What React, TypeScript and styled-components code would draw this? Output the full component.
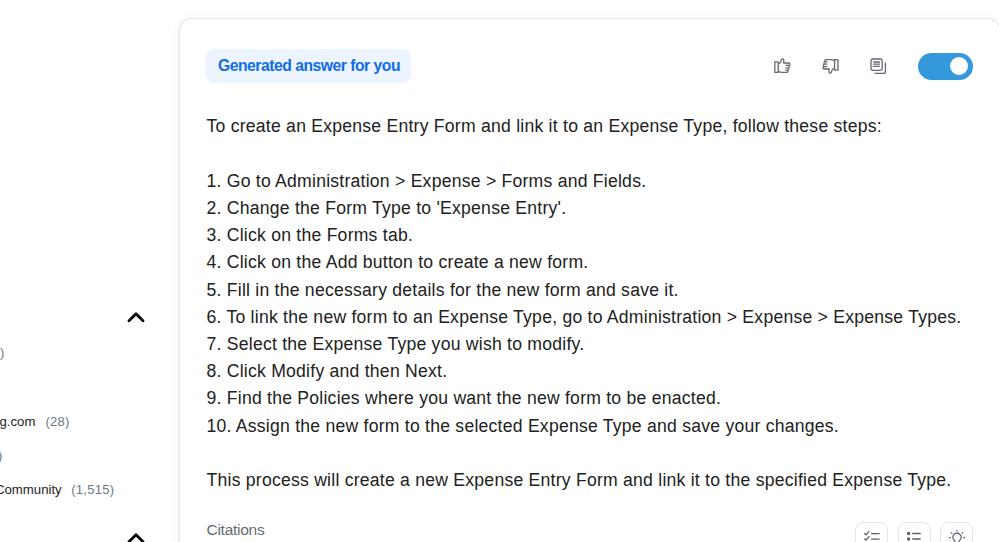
import React from "react";
import styled, { createGlobalStyle } from "styled-components";

const GlobalStyle = createGlobalStyle`
  * { box-sizing: border-box; }
  html, body { margin: 0; background: #fff; overflow: hidden; }
  body { font-family: "Liberation Sans", Arial, sans-serif; }
`;

const Page = styled.div`
  display: flex;
  width: 999px;
  height: 542px;
  overflow: hidden;
  background: #fff;
`;

const Sidebar = styled.aside`
  flex: 0 0 178px;
  padding-top: 300px;
`;

const SectionToggle = styled.div`
  display: flex;
  justify-content: flex-end;
  align-items: center;
  height: 34px;
  padding-right: 33px;
  svg { display: block; }
`;

const Facet = styled.div<{ $height: number; $shift: number }>`
  display: flex;
  align-items: center;
  height: ${(p) => p.$height}px;
  margin-left: ${(p) => p.$shift}px;
  font-size: 13.2px;
  color: #222;
  white-space: nowrap;
`;

const Count = styled.span<{ $gap?: number }>`
  margin-left: ${(p) => p.$gap ?? 0}px;
  font-size: 13px;
  letter-spacing: 0.3px;
  color: #6b7888;
`;

const FacetSpacer = styled.div<{ $height: number }>`
  height: ${(p) => p.$height}px;
`;

const Card = styled.main`
  flex: 0 0 823px;
  height: 620px;
  margin-top: 18px;
  padding: 30px 0 0 27px;
  border: 1px solid #e6e9ea;
  border-left: 2px solid #ececee;
  border-radius: 14px;
  background: #fff;
  box-shadow: 0 0 10px rgba(0, 0, 0, 0.05);
`;

const Header = styled.header`
  display: flex;
  align-items: center;
  width: 766px;
  height: 34px;
`;

const Badge = styled.div`
  width: 205px;
  height: 34px;
  margin-left: -1px;
  padding-left: 12px;
  border-radius: 8px;
  background: #ebf4ff;
  color: #116ce8;
  font-size: 15.7px;
  font-weight: 700;
  letter-spacing: -0.48px;
  line-height: 34px;
  white-space: nowrap;
`;

const Actions = styled.div`
  display: flex;
  align-items: center;
  gap: 31px;
  margin-left: auto;
  color: #626971;
  svg { display: block; }
`;

const Toggle = styled.div`
  display: flex;
  align-items: center;
  justify-content: flex-end;
  width: 55px;
  height: 27px;
  padding-right: 5px;
  border-radius: 14px;
  background: #3498db;
`;

const Knob = styled.div`
  width: 18px;
  height: 18px;
  border-radius: 50%;
  background: #fff;
`;

const Answer = styled.section`
  margin-top: 30.3px;
  margin-left: -0.5px;
  font-size: 17.6px;
  line-height: 27.2px;
  letter-spacing: 0.235px;
  color: #212121;
  white-space: nowrap;
`;

const Line = styled.p`
  margin: 0;
`;

const Steps = styled.div`
  margin: 27.2px 0;
`;

const Footer = styled.footer`
  display: flex;
  justify-content: space-between;
  width: 766px;
  margin-top: 26.7px;
`;

const Citations = styled.span`
  margin-left: -0.5px;
  font-size: 15.5px;
  letter-spacing: -0.27px;
  line-height: 18px;
  color: #636b75;
`;

const Formats = styled.div`
  display: flex;
  gap: 9.5px;
  margin-top: 1px;
`;

const FormatButton = styled.div`
  display: flex;
  justify-content: center;
  width: 33px;
  height: 34px;
  padding-top: 6px;
  border: 1px solid #e3e5e7;
  border-radius: 8px;
  color: #59616a;
  svg { display: block; flex: none; }
`;

const intro = "To create an Expense Entry Form and link it to an Expense Type, follow these steps:";
const steps = [
  "1. Go to Administration > Expense > Forms and Fields.",
  "2. Change the Form Type to 'Expense Entry'.",
  "3. Click on the Forms tab.",
  "4. Click on the Add button to create a new form.",
  "5. Fill in the necessary details for the new form and save it.",
  "6. To link the new form to an Expense Type, go to Administration > Expense > Expense Types.",
  "7. Select the Expense Type you wish to modify.",
  "8. Click Modify and then Next.",
  "9. Find the Policies where you want the new form to be enacted.",
  "10. Assign the new form to the selected Expense Type and save your changes.",
];
const outro = "This process will create a new Expense Entry Form and link it to the specified Expense Type.";

const Chevron = () => (
  <svg width="18" height="12" viewBox="0 0 18 12" fill="none" stroke="#000" strokeWidth="2.8" strokeLinecap="round" strokeLinejoin="round">
    <path d="M2 9.7 9 2.8l7 6.9" />
  </svg>
);

const Thumb = ({ down }: { down?: boolean }) => (
  <svg width="17" height="16" viewBox="0 0 17 16" fill="none" stroke="currentColor" strokeWidth="1.3" strokeLinejoin="round">
    <g transform={down ? "rotate(180 8.4 8)" : undefined}>
      <path d="M.8 3.9h3.4v10.4H.8z" />
      <path d="M4.4 5.9c1.8-.6 2.6-1.4 2.7-3.2C7.2 1.5 7.5.8 8.4.8c1 0 1.5.9 1.4 2.2l-.2 2h5c1.7 0 1.7 2.4 0 2.4h-3.2m3 0c1.4.2 1.3 2.4-.1 2.4h-2.9m2.6 0c1.3.2 1.1 2.3-.2 2.3h-2.5m2 0c1.1.2.9 2.2-.4 2.2H7.3c-1.1 0-1.9-.7-2.9-.7" />
    </g>
  </svg>
);

const Copy = () => (
  <svg width="17" height="17" viewBox="0 0 17 17" fill="none" stroke="currentColor" strokeWidth="1.3" strokeLinecap="round">
    <rect x="1" y="1" width="11.2" height="11.3" rx="1.8" />
    <path d="M3.7 4h5.8M3.7 6.2h5.8M3.7 8.4h5.8M15.4 5v8.4a2 2 0 0 1-2 2H5" />
  </svg>
);

const Checklist = () => (
  <svg width="18" height="14" viewBox="0 0 18 14" fill="none" stroke="currentColor" strokeWidth="1.3" strokeLinecap="round">
    <path d="m1.5 4.4 1.5 1.5L6 2.6M8.5 4.6h7.7M1.5 9.6 3 11.1l3-3.3M8.5 10.1h7.7" />
  </svg>
);

const BulletList = () => (
  <svg width="18" height="14" viewBox="0 0 18 14" fill="none" stroke="currentColor" strokeWidth="1.3" strokeLinecap="round">
    <circle cx="3.6" cy="4.5" r="1.7" fill="currentColor" stroke="none" />
    <circle cx="3.6" cy="10" r="1.7" fill="currentColor" stroke="none" />
    <path d="M7.7 4.5h7.5M7.7 10h7.5" />
  </svg>
);

const Bulb = () => (
  <svg width="18" height="18" viewBox="0 0 18 18" fill="none" stroke="currentColor" strokeWidth="1.2" strokeLinecap="round">
    <path d="M7 14v-1.6c0-.8-2.2-1.7-2.2-4.1a4.2 4.2 0 0 1 8.4 0c0 2.4-2.2 3.3-2.2 4.1V14zM9 1.5v.6M3.2 3.6l.7.6M14.8 3.6l-.7.6M1.4 8.7h1M15.6 8.7h1" />
  </svg>
);

export default function App() {
  return (
    <>
      <GlobalStyle />
      <Page>
        <Sidebar>
          <SectionToggle><Chevron /></SectionToggle>
          <Facet $height={37} $shift={0}><Count>)</Count></Facet>
          <FacetSpacer $height={35} />
          <Facet $height={30} $shift={-0.5}>g.com<Count $gap={10}>(28)</Count></Facet>
          <Facet $height={39} $shift={-2}><Count>)</Count></Facet>
          <Facet $height={28} $shift={-5}>Community<Count $gap={9.5}>(1,515)</Count></Facet>
          <FacetSpacer $height={18} />
          <SectionToggle><Chevron /></SectionToggle>
        </Sidebar>
        <Card>
          <Header>
            <Badge>Generated answer for you</Badge>
            <Actions>
              <Thumb />
              <Thumb down />
              <Copy />
              <Toggle><Knob /></Toggle>
            </Actions>
          </Header>
          <Answer>
            <Line>{intro}</Line>
            <Steps>
              {steps.map((s) => <Line key={s}>{s}</Line>)}
            </Steps>
            <Line>{outro}</Line>
          </Answer>
          <Footer>
            <Citations>Citations</Citations>
            <Formats>
              <FormatButton><Checklist /></FormatButton>
              <FormatButton><BulletList /></FormatButton>
              <FormatButton><Bulb /></FormatButton>
            </Formats>
          </Footer>
        </Card>
      </Page>
    </>
  );
}
